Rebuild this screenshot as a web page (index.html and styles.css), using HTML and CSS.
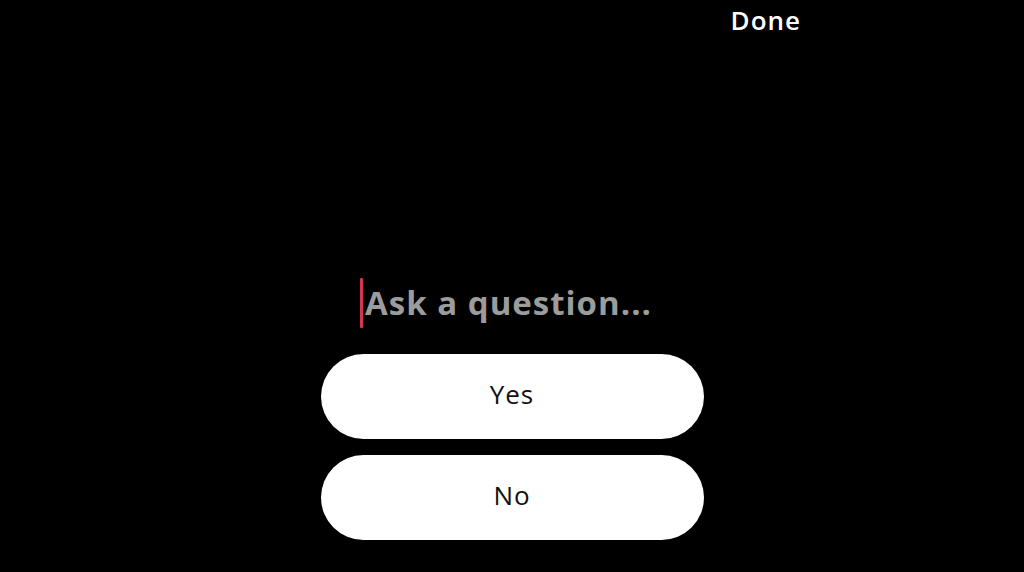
FILE: index.html
```html
<!DOCTYPE html>
<html lang="en">
<head>
    <meta charset="UTF-8">
    <meta name="viewport" content="width=device-width, initial-scale=1.0">
    <title>Poll sticker</title>
    <link rel="stylesheet" href="styles.css">
</head>
<body>
    <div class="screen">
        <div class="topbar">
            <span class="done">Done</span>
        </div>

        <div class="poll">
            <div class="question">
                <span class="caret"></span>
                <span class="placeholder">Ask a question...</span>
            </div>
            <div class="option">Yes</div>
            <div class="option">No</div>
        </div>
    </div>
</body>
</html>
```

FILE: styles.css
```css
* {
    margin: 0;
    padding: 0;
    box-sizing: border-box;
}

body {
    font-family: 'Open Sans', 'Noto Sans', sans-serif;
    background: #000;
    height: 572px;
    overflow: hidden;
}

.screen {
    width: 600px;
    height: 572px;
    margin: 0 auto;
    display: flex;
    flex-direction: column;
}

.topbar {
    display: flex;
    justify-content: flex-end;
    padding: 3px 11px 0 0;
}

.done {
    color: #fff;
    font-size: 26px;
    font-weight: 600;
    letter-spacing: 1px;
    line-height: 34px;
}

/* Sondagem */
.poll {
    margin-top: 241px;
    display: flex;
    flex-direction: column;
    align-items: center;
    gap: 16px;
}

.question {
    display: flex;
    align-items: center;
    gap: 2px;
    height: 50px;
    margin-bottom: 10px;
    padding-right: 12px;
}

.caret {
    width: 3px;
    height: 50px;
    background: #d6354f;
    border-radius: 1px;
}

.placeholder {
    color: #9c9c9c;
    font-size: 33px;
    font-weight: 700;
    letter-spacing: 1px;
    line-height: 40px;
}

.option {
    width: 383px;
    height: 85px;
    padding-bottom: 5px;
    border-radius: 43px;
    background: #fff;
    color: #111;
    font-size: 26px;
    letter-spacing: 1px;
    display: flex;
    align-items: center;
    justify-content: center;
}
```
